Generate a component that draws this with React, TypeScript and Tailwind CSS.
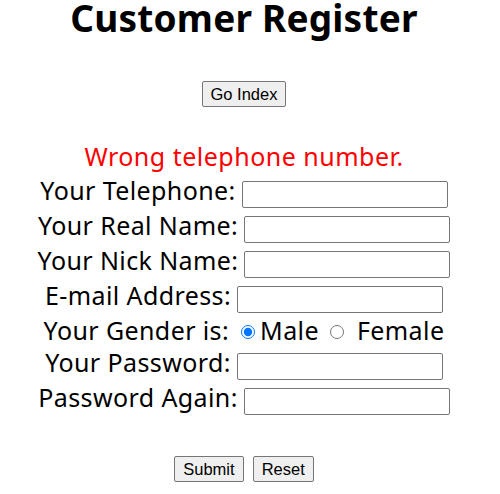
import React from "react";

const font = { fontFamily: '"Noto Sans", "Open Sans", sans-serif' };

function Field({ label, type = "text" }: { label: string; type?: string }) {
  return (
    <div className="flex h-[35px] items-start justify-center">
      <span className="text-[25px] leading-[30px] tracking-[0.4px] whitespace-nowrap">{label}</span>
      <input
        type={type}
        className="ml-[6px] mt-[6px] h-[27px] w-[206px] rounded-[2px] border border-[#767676] bg-white px-1 outline-none"
      />
    </div>
  );
}

function Btn({ children }: { children: React.ReactNode }) {
  return (
    <button
      type="button"
      className="h-[26px] rounded-[2px] border border-[#767676] bg-[#efefef] px-[8px] text-[16.5px] leading-[20px] text-black"
      style={{ fontFamily: '"Liberation Sans", Arial, sans-serif' }}
    >
      {children}
    </button>
  );
}

export default function App() {
  return (
    <div className="w-[488px] bg-white text-black" style={font}>
      {/* Title */}
      <h1 className="pt-[2px] text-center text-[37px] font-bold leading-[32px] tracking-[0.2px]">Customer Register</h1>

      <div className="mt-[47px] flex justify-center">
        <Btn>Go Index</Btn>
      </div>

      {/* Form */}
      <form className="mt-[34px]">
        <div className="mb-[4px] text-center text-[25px] leading-[30px] tracking-[0.5px] text-[#ff0000]">
          Wrong telephone number.
        </div>
        <Field label="Your Telephone:" />
        <Field label="Your Real Name:" />
        <Field label="Your Nick Name:" />
        <Field label="E-mail Address:" type="email" />

        <div className="flex h-[32px] items-start justify-center text-[25px] leading-[30px] tracking-[0.4px]">
          <span className="whitespace-nowrap">Your Gender is:</span>
          <input
            type="radio"
            name="gender"
            defaultChecked
            className="ml-[12px] mt-[10px] h-[14px] w-[14px] accent-[#0075ff]"
          />
          <span className="ml-[5px]">Male</span>
          <input
            type="radio"
            name="gender"
            className="ml-[11px] mt-[10px] h-[14px] w-[14px] accent-[#0075ff]"
          />
          <span className="ml-[13px]">Female</span>
        </div>

        <Field label="Your Password:" type="password" />
        <Field label="Password Again:" type="password" />

        <div className="mt-[39px] flex justify-center gap-[9px]">
          <Btn>Submit</Btn>
          <Btn>Reset</Btn>
        </div>
      </form>
    </div>
  );
}
